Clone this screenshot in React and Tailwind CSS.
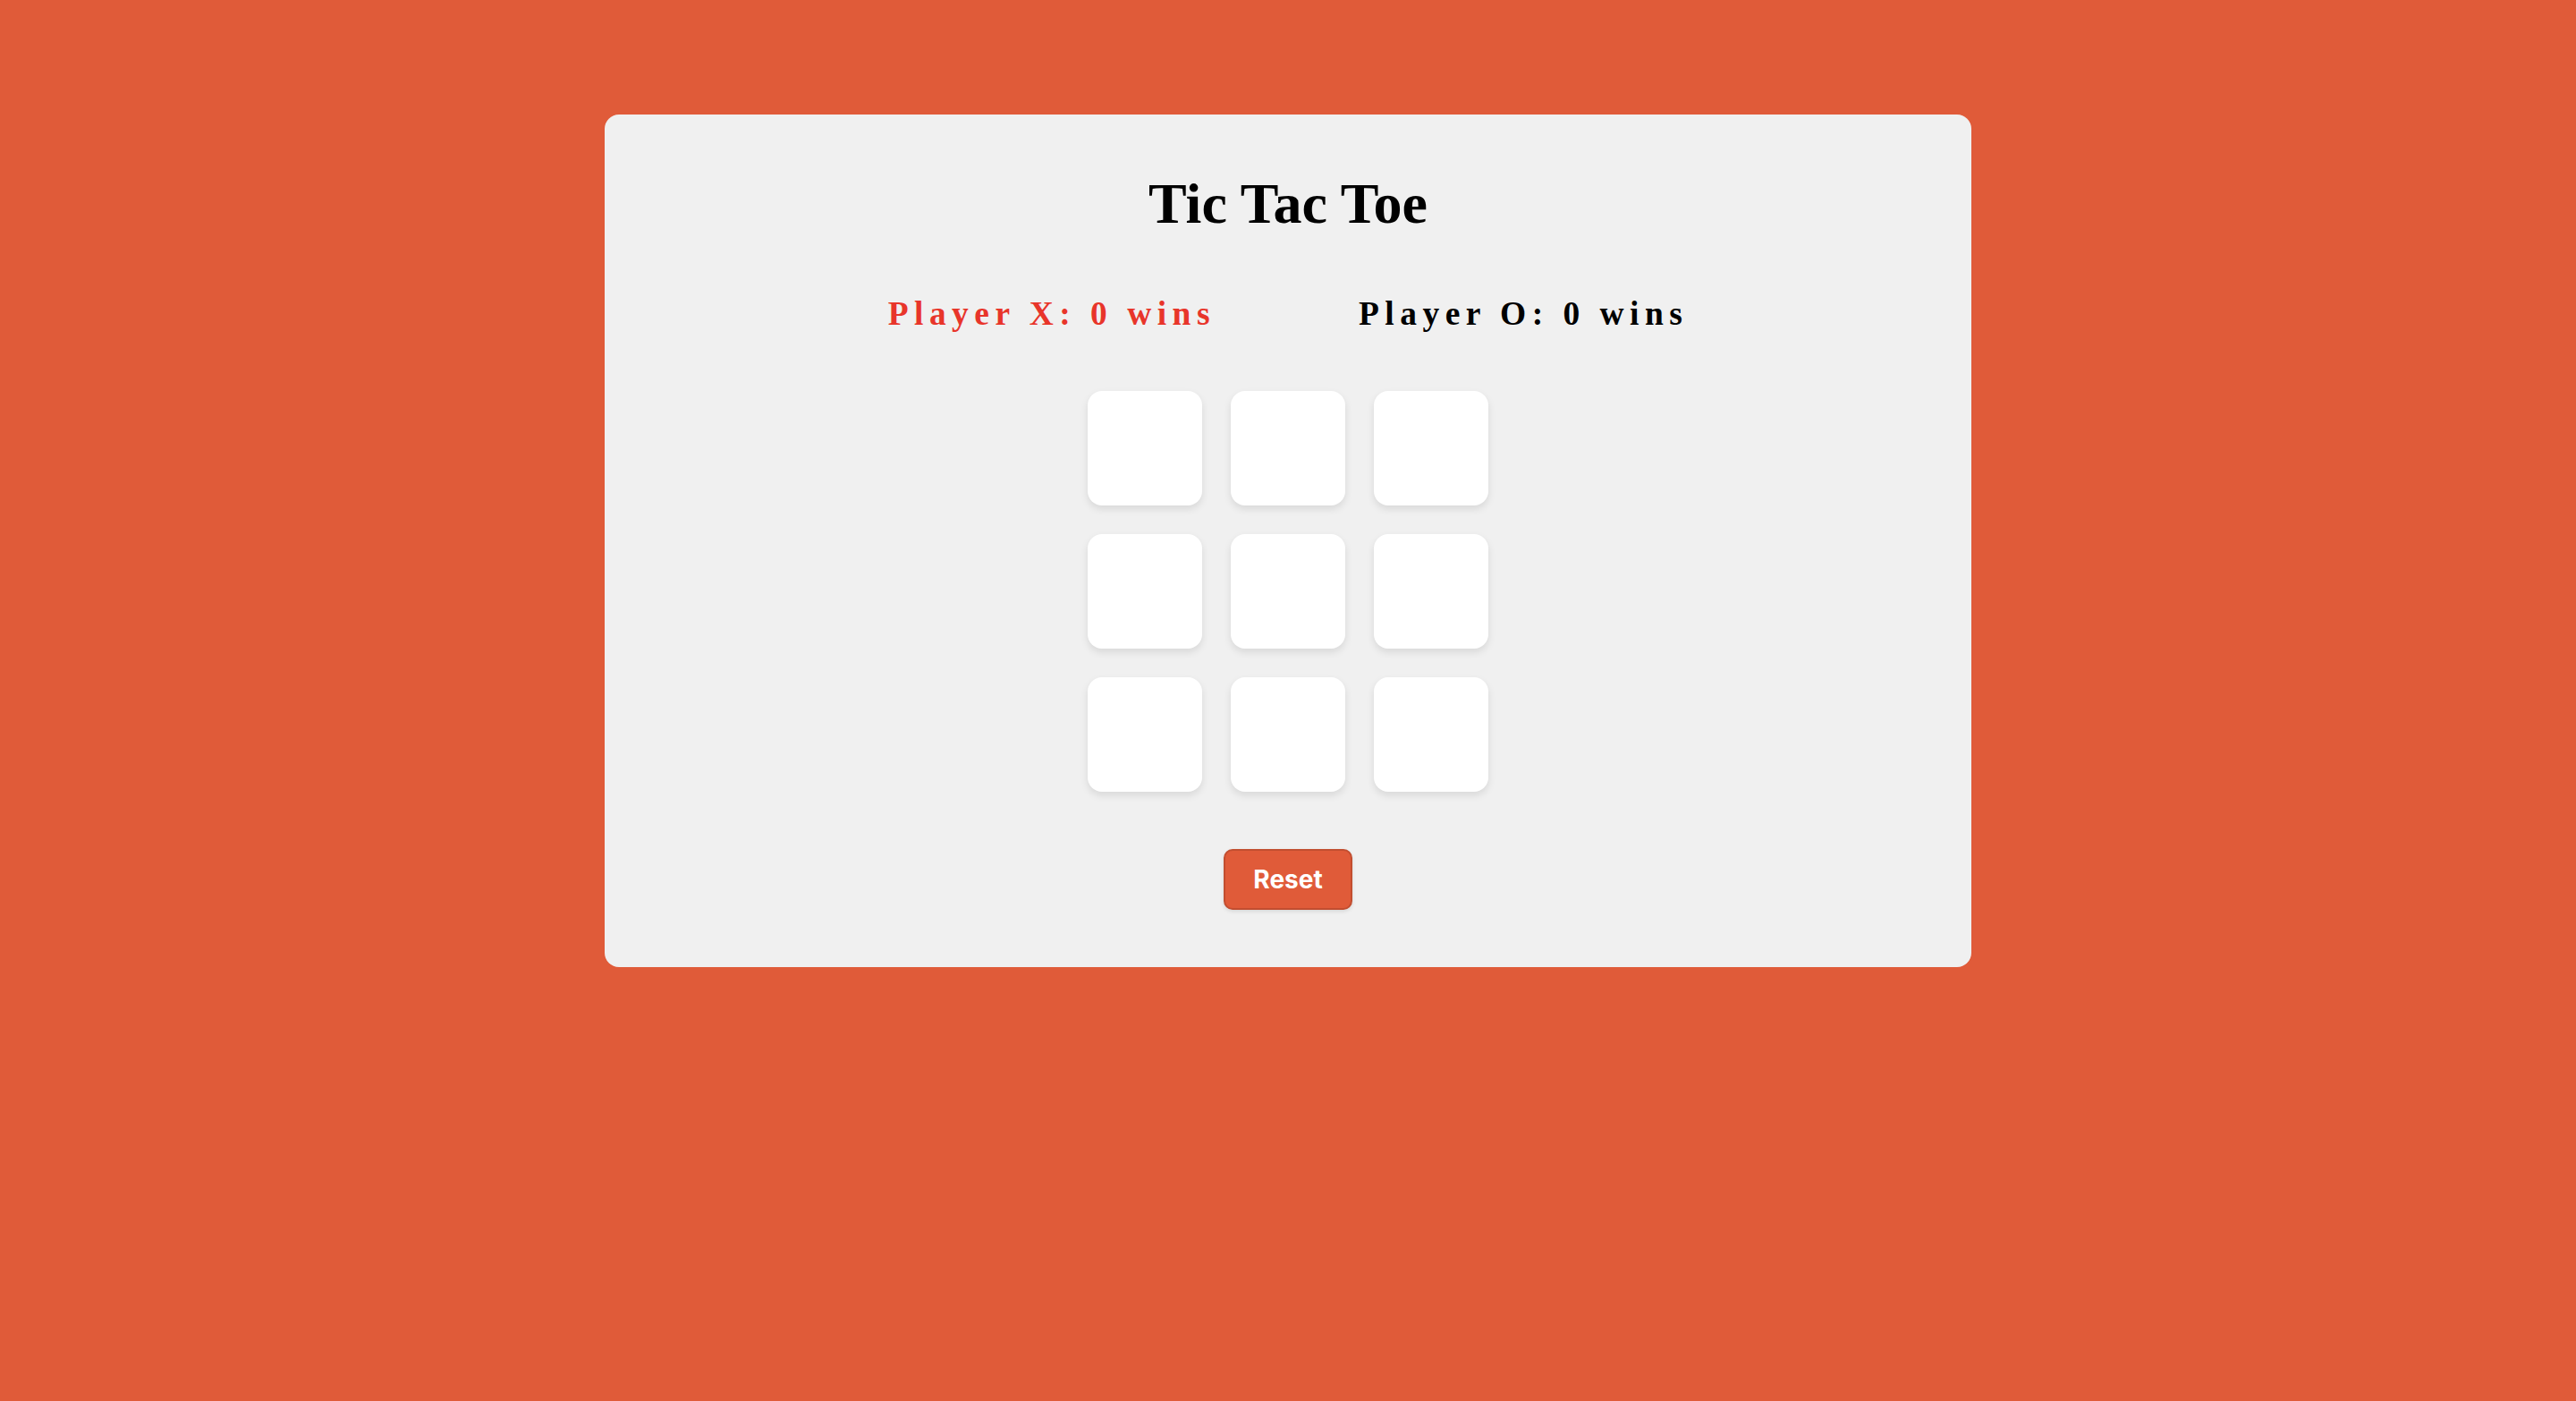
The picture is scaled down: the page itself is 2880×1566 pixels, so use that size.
export default function App() {
  const cells = Array.from({ length: 9 });
  return (
    <div className="min-h-screen w-full bg-[#e05b39] pt-[128px]">
      <div className="mx-auto flex w-[1528px] flex-col items-center rounded-[16px] bg-[#f0f0f0] pt-[68px] pb-[64px]">
        <h1 className="text-[64px] font-bold leading-none text-black" style={{ fontFamily: '"Liberation Serif", "Times New Roman", serif' }}>
          Tic Tac Toe
        </h1>
        <div
          className="mt-[72px] flex items-center gap-[160px] text-[37.44px] font-bold leading-none tracking-[6.5px]"
          style={{ fontFamily: '"Liberation Serif", "Times New Roman", serif' }}
        >
          <span className="text-[#e8352a]">Player X: 0 wins</span>
          <span className="text-black">Player O: 0 wins</span>
        </div>
        <div className="mt-[68px] grid grid-cols-3 gap-[32px]">
          {cells.map((_, i) => (
            <button
              key={i}
              className="h-[128px] w-[128px] rounded-[16px] bg-white shadow-[0_4px_8px_rgba(0,0,0,0.1)]"
            />
          ))}
        </div>
        <button
          className="mt-[64px] flex h-[68px] w-[144px] items-center justify-center rounded-[10px] border-2 border-[#c24e30] bg-[#e05b39] text-[28px] font-bold text-white shadow-[0_2px_4px_rgba(0,0,0,0.1)]"
          style={{ fontFamily: 'Inter, "Liberation Sans", sans-serif' }}
        >
          Reset
        </button>
      </div>
    </div>
  );
}
